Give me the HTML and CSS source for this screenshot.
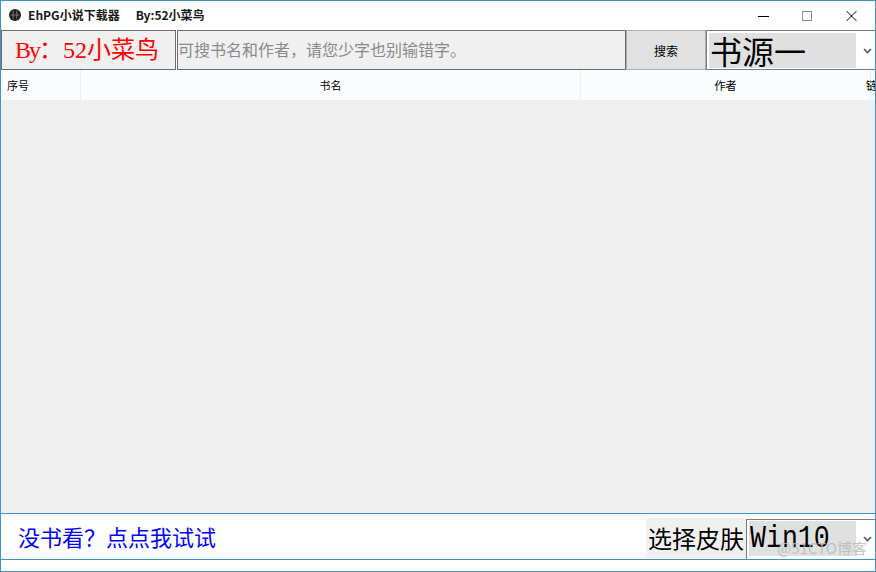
FILE: index.html
```html
<!DOCTYPE html>
<html lang="zh">
<head>
<meta charset="utf-8">
<title>EhPG小说下载器</title>
<link rel="stylesheet" href="styles.css">
</head>
<body>
<div class="window">
  <div class="titlebar">
    <svg class="app-icon" width="12" height="12" viewBox="0 0 12 12"><circle cx="6" cy="6" r="6" fill="#1c1c1c"/><path d="M4.2 1.5v9M7.8 1.5v9M1.5 6h9" stroke="#8a8a8a" stroke-width=".8"/></svg>
    <span class="app-title">EhPG小说下载器</span>
    <span class="app-by">By:52小菜鸟</span>
    <div class="win-controls">
      <svg class="win-btn" width="45" height="29" viewBox="0 0 45 29"><path d="M19 15.500h11" stroke="#000"/></svg>
      <svg class="win-btn" width="45" height="29" viewBox="0 0 45 29"><rect x="18.500" y="10.500" width="9" height="9" fill="none" stroke="#888"/></svg>
      <svg class="win-btn" width="45" height="29" viewBox="0 0 45 29"><path d="M17.500 10l10 10M27.500 10l-10 10" stroke="#000"/></svg>
    </div>
  </div>
  <div class="toolbar">
    <div class="brand"><span class="brand-by">By</span>：52小菜鸟</div>
    <div class="search-input">可搜书名和作者，请您少字也别输错字。</div>
    <div class="search-btn">搜索</div>
    <div class="select source">
      <span class="select-value source-value">书源一</span>
      <svg class="chev" width="9" height="6" viewBox="0 0 9 6"><path d="M1 1l3.500 3.500L8 1" fill="none" stroke="#555" stroke-width="1.600"/></svg>
    </div>
  </div>
  <div class="table-head">
    <div class="col col-no">序号</div>
    <div class="col col-name">书名</div>
    <div class="col col-author">作者</div>
    <div class="col col-link">链接</div>
  </div>
  <div class="table-body"></div>
  <div class="footer">
    <span class="try-link">没书看？点点我试试</span>
    <span class="skin-label">选择皮肤</span>
    <div class="select skin">
      <span class="select-value skin-value"><span class="skin-text">Win10</span></span>
      <svg class="chev" width="9" height="6" viewBox="0 0 9 6"><path d="M1 1l3.500 3.500L8 1" fill="none" stroke="#555" stroke-width="1.600"/></svg>
    </div>
    <span class="watermark">@51CTO博客</span>
  </div>
  <div class="statusbar"></div>
</div>
</body>
</html>
```
FILE: styles.css
```css
* { box-sizing: border-box; }
html, body { margin: 0; padding: 0; background: #fff; }
body { font-family: "Noto Sans CJK SC", "Liberation Sans", sans-serif; overflow: hidden; }
.window {
  width: 876px; height: 572px;
  border: 1px solid #3f92c6;
  display: flex; flex-direction: column;
  background: #fff;
}
.titlebar {
  height: 29px; flex: none;
  display: flex; align-items: center;
  padding-left: 8px; padding-bottom: 2px;
  font-size: 12px; font-weight: 700; color: #1a1a1a;
}
.app-icon { margin-right: 7px; }
.app-by { margin-left: 16px; }
.win-controls { margin-left: auto; margin-right: 1px; display: flex; height: 27px; align-items: flex-start; }
.win-btn { display: block; }
.toolbar { height: 40px; flex: none; display: flex; }
.brand {
  width: 175px; flex: none;
  border: 1px solid #6c6c6c;
  background: #f0f0f0;
  color: #ff0000;
  font-family: "Liberation Serif", "Noto Sans CJK SC", serif;
  font-size: 24px; line-height: 38px;
  padding-left: 13px; white-space: nowrap;
}
.brand-by { letter-spacing: -2px; }
.search-input {
  width: 449px; flex: none; margin-left: 1px;
  border: 1px solid #6c6c6c;
  background: #f0f0f0; color: #8a8a8a;
  font-size: 16px; line-height: 36px;
  white-space: nowrap;
}
.search-btn {
  width: 80px; flex: none;
  background: #e1e1e1;
  border: 1px solid #adadad;
  font-size: 12px; color: #000;
  display: flex; align-items: center; justify-content: center;
}
.select {
  display: flex; align-items: flex-start; flex: none; position: relative;
  background: #fff; border: 1px solid #7a7a7a; border-right: 0;
}
.source { width: 169px; height: 40px; padding: 2px 0 0 2px; }
.select-value { background: #e0e0e0; color: #000; display: block; white-space: nowrap; }
.source-value { width: 147px; height: 35px; font-size: 32px; line-height: 35px; padding-left: 1px; }
.chev { position: absolute; right: 3px; top: 17px; }
.table-head {
  height: 30px; flex: none; display: flex;
  background: #fbfcfe;
  font-size: 11px; color: #000;
  overflow: hidden;
}
.col { border-right: 1px solid #e6effa; line-height: 30px; flex: none; white-space: nowrap; }
.col-no { width: 80px; padding-left: 6px; }
.col-name { width: 500px; text-align: center; }
.col-author { width: 290px; text-align: center; }
.col-link { width: 60px; margin-left: -5px; border-right: 0; }
.table-body { flex: 1; background: #efefef; min-height: 0; }
.footer {
  height: 47px; flex: none;
  display: flex; align-items: flex-end; position: relative;
  border-top: 1px solid #3f92c6;
  border-bottom: 1px solid #3f92c6;
  background: #fff;
}
.try-link { color: #0000ff; font-size: 22px; line-height: 45px; margin-left: 17px; margin-right: auto; white-space: nowrap; }
.skin-label {
  background: #f0f0f0; color: #000;
  font-size: 24px; line-height: 40px; height: 40px;
  width: 100px; margin-bottom: 1px; text-align: center; white-space: nowrap;
}
.skin { width: 129px; height: 40px; padding: 1px 0 0 2px; border-bottom: 0; }
.skin-value {
  width: 107px; height: 35px;
  font-family: "Liberation Mono", monospace;
  font-size: 32px; line-height: 35px; padding-left: 1px;
}
.skin-text { display: inline-block; transform: scaleX(.83); transform-origin: left center; }
.skin .chev { top: 16px; }
.watermark { position: absolute; right: 8px; bottom: 1px; font-size: 15px; color: #bbb; opacity: .85; white-space: nowrap; }
.statusbar { height: 11px; flex: none; background: #fff; }
```
